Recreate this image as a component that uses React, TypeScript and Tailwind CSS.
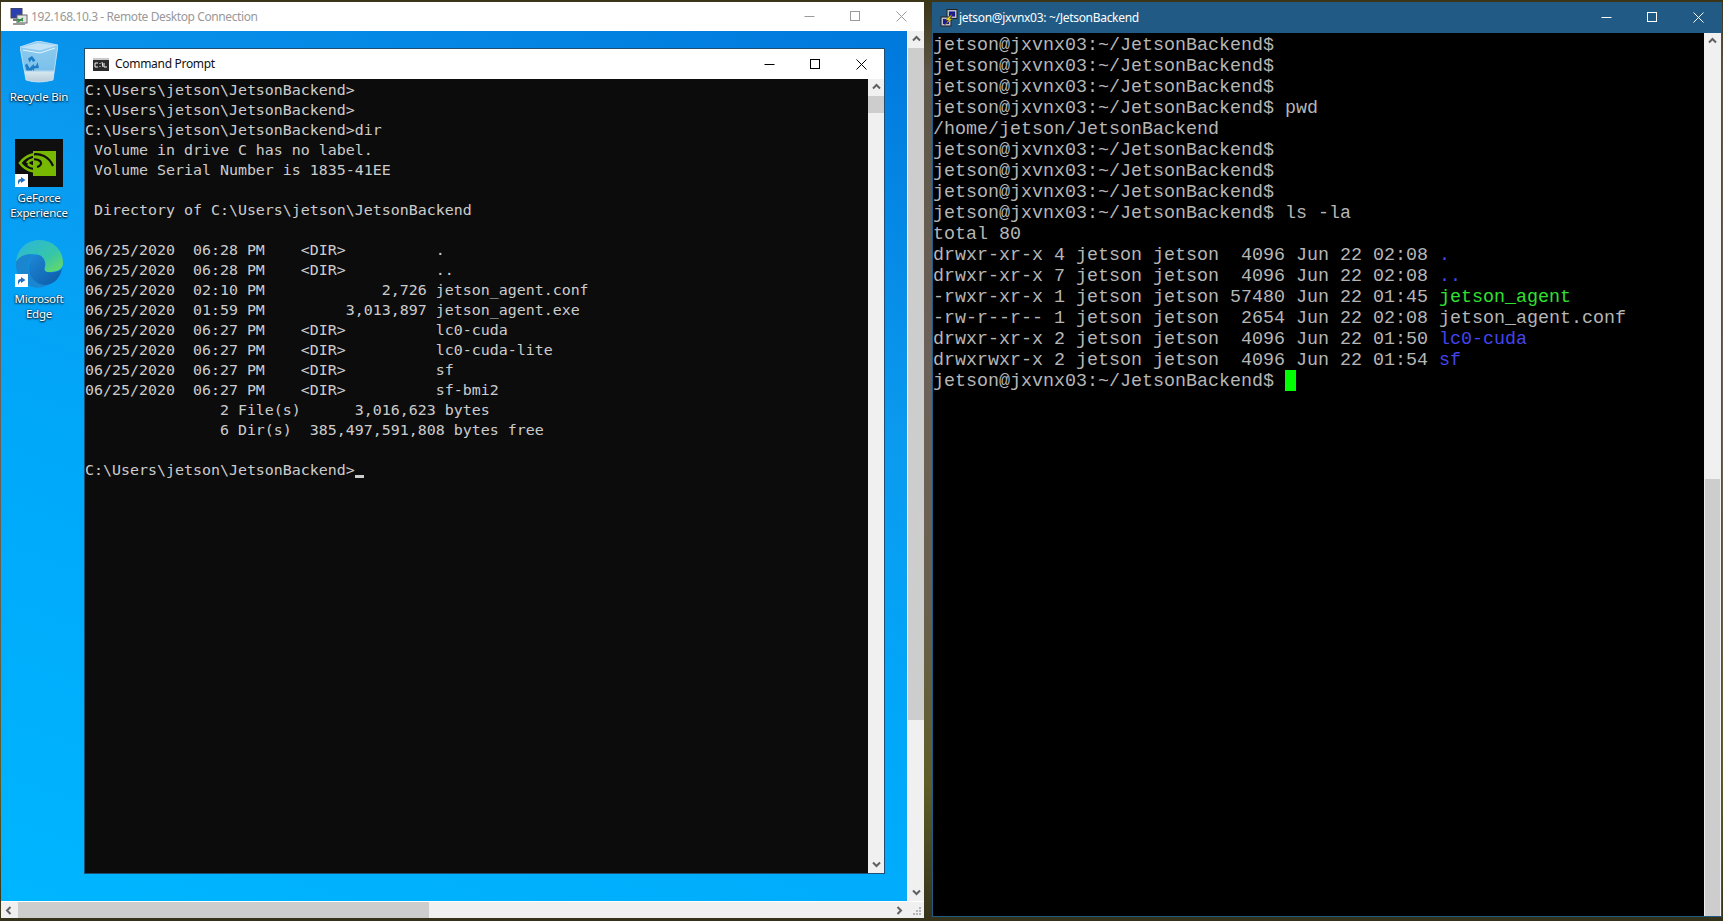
import type { ReactNode } from "react";

const cmdLines = [
  "C:\\Users\\jetson\\JetsonBackend>",
  "C:\\Users\\jetson\\JetsonBackend>",
  "C:\\Users\\jetson\\JetsonBackend>dir",
  " Volume in drive C has no label.",
  " Volume Serial Number is 1835-41EE",
  "",
  " Directory of C:\\Users\\jetson\\JetsonBackend",
  "",
  "06/25/2020  06:28 PM    <DIR>          .",
  "06/25/2020  06:28 PM    <DIR>          ..",
  "06/25/2020  02:10 PM             2,726 jetson_agent.conf",
  "06/25/2020  01:59 PM         3,013,897 jetson_agent.exe",
  "06/25/2020  06:27 PM    <DIR>          lc0-cuda",
  "06/25/2020  06:27 PM    <DIR>          lc0-cuda-lite",
  "06/25/2020  06:27 PM    <DIR>          sf",
  "06/25/2020  06:27 PM    <DIR>          sf-bmi2",
  "               2 File(s)      3,016,623 bytes",
  "               6 Dir(s)  385,497,591,808 bytes free",
  "",
];

const prompt = "jetson@jxvnx03:~/JetsonBackend$";
const termLines: [string, string?, "blue" | "green"?][] = [
  [prompt],
  [prompt],
  [prompt],
  [prompt + " pwd"],
  ["/home/jetson/JetsonBackend"],
  [prompt],
  [prompt],
  [prompt],
  [prompt + " ls -la"],
  ["total 80"],
  ["drwxr-xr-x 4 jetson jetson  4096 Jun 22 02:08 ", ".", "blue"],
  ["drwxr-xr-x 7 jetson jetson  4096 Jun 22 02:08 ", "..", "blue"],
  ["-rwxr-xr-x 1 jetson jetson 57480 Jun 22 01:45 ", "jetson_agent", "green"],
  ["-rw-r--r-- 1 jetson jetson  2654 Jun 22 02:08 jetson_agent.conf"],
  ["drwxr-xr-x 2 jetson jetson  4096 Jun 22 01:50 ", "lc0-cuda", "blue"],
  ["drwxrwxr-x 2 jetson jetson  4096 Jun 22 01:54 ", "sf", "blue"],
];

function WinControls({ color }: { color: string }) {
  return (
    <div className="flex h-full items-center" style={{ color }}>
      <div className="flex w-[46px] justify-center">
        <svg width="11" height="11" viewBox="0 0 11 11" fill="none" stroke="currentColor" strokeWidth="1">
          <path d="M0.5 5.5H10.5" />
        </svg>
      </div>
      <div className="flex w-[46px] justify-center">
        <svg width="11" height="11" viewBox="0 0 11 11" fill="none" stroke="currentColor" strokeWidth="1">
          <rect x="0.5" y="0.5" width="9" height="9" />
        </svg>
      </div>
      <div className="flex w-[46px] justify-center">
        <svg width="11" height="11" viewBox="0 0 11 11" fill="none" stroke="currentColor" strokeWidth="1">
          <path d="M0.5 0.5L10.5 10.5M10.5 0.5L0.5 10.5" />
        </svg>
      </div>
    </div>
  );
}

function Chevron({ dir }: { dir: "up" | "down" | "left" | "right" }) {
  const d = {
    up: "M1 5.5L4.5 2L8 5.5",
    down: "M1 2.5L4.5 6L8 2.5",
    left: "M5.5 1L2 4.5L5.5 8",
    right: "M2.5 1L6 4.5L2.5 8",
  }[dir];
  return (
    <svg width="9" height="9" viewBox="0 0 9 9" fill="none" stroke="#606060" strokeWidth="2">
      <path d={d} />
    </svg>
  );
}

function ShortcutBadge() {
  return (
    <div className="flex size-[13px] items-center justify-center bg-white">
      <svg width="11" height="11" viewBox="0 0 11 11">
        <path d="M2 10V6.5C2 4.8 3.2 4 5 4V2L9.5 5L5 8V6.2C3.8 6.2 3 7.5 2 10Z" fill="#1f6fc4" />
      </svg>
    </div>
  );
}

function DesktopIcon({ icon, label }: { icon: ReactNode; label: string[] }) {
  return (
    <div className="flex flex-col items-center">
      {icon}
      <div className="mt-[3px] text-center font-['Noto_Sans',sans-serif] text-[11.5px] leading-[15.5px] tracking-[-0.2px] text-white [text-shadow:0_1px_2px_#000,0_0_2px_#003a66]">
        {label.map((l) => (
          <div key={l} className="whitespace-nowrap">
            {l}
          </div>
        ))}
      </div>
    </div>
  );
}

function RecycleBin() {
  return (
    <svg width="38" height="42" viewBox="0 0 38 42" className="mb-[3px]">
      <defs>
        <linearGradient id="bin" x1="0" y1="0" x2="0" y2="1">
          <stop offset="0" stopColor="#8fcdf0" />
          <stop offset="0.7" stopColor="#7cc0ea" />
          <stop offset="0.76" stopColor="#d4e6f0" />
          <stop offset="1" stopColor="#b9cbd6" />
        </linearGradient>
      </defs>
      <path d="M0 6L18 0L38 4L33 39Q18 43 6 39Z" fill="url(#bin)" stroke="#cfeafa" strokeWidth="0.8" />
      <path d="M1 6.5L18 2L37 4.5L20 9.5Z" fill="#bfe2f6" />
      <path d="M3 9L20 12L35 7" fill="none" stroke="#e6f5fd" strokeWidth="1" />
      <path
        d="M8 17.5L12 15L15.5 19.5L13 21L11.5 18.5L9.5 21.5ZM17.5 21L19 27L14 27.5V30L10 26.5L14 23V25L16 24.7ZM5 24L7 22.5L9.5 27L12 27V29.5H6.5Z"
        fill="#1c7cc4"
      />
    </svg>
  );
}

function GeForce() {
  return (
    <div className="relative size-[48px] bg-[#0f0f0f]">
      <svg width="48" height="48" viewBox="0 0 48 48">
        <defs>
          <clipPath id="eyeL">
            <rect x="0" y="0" width="19" height="48" />
          </clipPath>
          <clipPath id="eyeR">
            <rect x="19" y="0" width="29" height="48" />
          </clipPath>
        </defs>
        <rect x="18" y="12" width="23" height="25" fill="#76b900" />
        <g fill="none" strokeWidth="2.6" clipPath="url(#eyeL)" stroke="#76b900">
          <path d="M5 24C11 16 20 13 29 17C33 19 36 22 38 25C33 31 25 34 17 32C12 31 8 28 5 24Z" />
          <path d="M12 24C15 20 21 19 25 22C27 24 26 27 22 28C18 28 15 27 13 25" />
        </g>
        <g fill="none" strokeWidth="2.2" clipPath="url(#eyeR)" stroke="#0f0f0f">
          <path d="M5 24C11 16 20 13 29 17C33 19 36 22 38 27" />
          <path d="M12 24C15 20 21 19 25 22C27 24 26 27 22 28" />
        </g>
      </svg>
      <div className="absolute bottom-[0px] left-0">
        <ShortcutBadge />
      </div>
    </div>
  );
}

function Edge() {
  return (
    <div className="relative size-[48px]">
      <svg width="48" height="48" viewBox="0 0 48 48">
        <defs>
          <linearGradient id="edgeA" x1="0" y1="0" x2="1" y2="1">
            <stop offset="0" stopColor="#2bb4e0" />
            <stop offset="0.6" stopColor="#35c6a8" />
            <stop offset="1" stopColor="#6ddc5e" />
          </linearGradient>
          <linearGradient id="edgeB" x1="0" y1="0" x2="1" y2="1">
            <stop offset="0" stopColor="#1e88d8" />
            <stop offset="1" stopColor="#0c59a4" />
          </linearGradient>
        </defs>
        <path d="M1 22C2 9 12 0 24 0C38 0 48 10 48 23C48 30 41 32 33 32C28 32 28 30 30 27C32 22 27 14 19 14C10 14 4 17 1 22Z" fill="url(#edgeA)" />
        <path d="M1 22C5 15 13 13 20 15C15 18 12 24 14 32C16 40 24 46 33 45C28 48 21 49 15 46C6 42 0 33 1 22Z" fill="#1a86d0" />
        <path d="M20 15C26 14 31 19 30 26C28 32 32 33 40 32C44 31 46 30 47 28C46 37 39 45 30 45C23 45 15 39 14 31C13 24 15 18 20 15Z" fill="url(#edgeB)" />
      </svg>
      <div className="absolute bottom-[1px] left-0">
        <ShortcutBadge />
      </div>
    </div>
  );
}

function RdpIcon() {
  return (
    <svg width="18" height="18" viewBox="0 0 18 18">
      <rect x="1" y="0" width="11" height="10" fill="#2a3fb0" stroke="#444" strokeWidth="1" />
      <rect x="7" y="7" width="10" height="8" fill="#e4e4e4" stroke="#666" strokeWidth="1" />
      <path d="M3 12H13" stroke="#777" strokeWidth="2" />
      <path d="M8 11L10 12.5L8 14M13 10L11 11.5L13 13" stroke="#1f9a38" strokeWidth="1.2" fill="none" />
      <rect x="3" y="15" width="12" height="2" fill="#9a9a9a" />
    </svg>
  );
}

function CmdIcon() {
  return (
    <svg width="16" height="13" viewBox="0 0 16 13">
      <rect width="16" height="13" fill="#2a2a2a" />
      <rect width="16" height="2" fill="#c9c9c9" />
      <path d="M5 5H2V9H5M7 5V6M7 8V9M9 4L10 9M11 5V9H14" stroke="#f2f2f2" strokeWidth="1" fill="none" />
    </svg>
  );
}

function PuttyIcon() {
  return (
    <svg width="18" height="18" viewBox="0 0 18 18">
      <rect x="7" y="0.5" width="10" height="9" fill="#bcbccc" stroke="#222" strokeWidth="1" />
      <rect x="9" y="2.5" width="6" height="5" fill="#18189a" />
      <rect x="1" y="8" width="10" height="9" fill="#bcbccc" stroke="#222" strokeWidth="1" />
      <rect x="3" y="10" width="6" height="5" fill="#18189a" />
      <path d="M13 4L5 11.5L8.5 11L4.5 16L13 9.5L9.5 10Z" fill="#ffe81a" stroke="#222" strokeWidth="0.5" />
    </svg>
  );
}

function CommandPrompt() {
  return (
    <div className="flex h-[826px] w-[801px] flex-col border border-[#1f4f72] bg-white">
      <div className="flex h-[30px] shrink-0 items-center justify-between">
        <div className="flex items-center pl-[8px]">
          <CmdIcon />
          <span className="ml-[6px] font-['Noto_Sans',sans-serif] text-[12px] tracking-[-0.3px] text-[#111]">Command Prompt</span>
        </div>
        <WinControls color="#000000" />
      </div>
      <div className="flex min-h-0 flex-1">
        <div className="flex-1 bg-[#0c0c0c] font-['DejaVu_Sans_Mono',monospace] text-[14.95px] leading-[22px] text-[#cccccc]">
          {cmdLines.map((l, i) => (
            <div key={i} className="h-[20px] whitespace-pre">
              {l}
            </div>
          ))}
          <div className="flex h-[20px] whitespace-pre">
            {"C:\\Users\\jetson\\JetsonBackend>"}
            <span className="mt-[16px] h-[3px] w-[9px] bg-[#cccccc]" />
          </div>
        </div>
        <div className="flex w-[16px] shrink-0 flex-col bg-[#f0f0f0]">
          <div className="flex h-[17px] items-center justify-center">
            <Chevron dir="up" />
          </div>
          <div className="h-[17px] w-full bg-[#cdcdcd]" />
          <div className="flex-1" />
          <div className="flex h-[17px] items-center justify-center">
            <Chevron dir="down" />
          </div>
        </div>
      </div>
    </div>
  );
}

function RemoteDesktop() {
  return (
    <div className="flex h-[916px] w-[923px] shrink-0 flex-col bg-white">
      <div className="flex h-[29px] shrink-0 items-center justify-between">
        <div className="flex items-center pl-[9px]">
          <RdpIcon />
          <span className="ml-[3px] font-['Noto_Sans',sans-serif] text-[12px] tracking-[-0.4px] text-[#999]">
            192.168.10.3 - Remote Desktop Connection
          </span>
        </div>
        <WinControls color="#9a9a9a" />
      </div>
      <div className="flex min-h-0 flex-1">
        <div className="flex w-[906px] bg-[linear-gradient(200deg,#0078dc_0%,#0a9bf0_35%,#00a8fa_60%,#00b6ff_100%)] pt-[17px]">
          <div className="-mt-[7px] flex w-[76px] flex-col items-center">
            <DesktopIcon icon={<RecycleBin />} label={["Recycle Bin"]} />
            <div className="mt-[34px]">
              <DesktopIcon icon={<GeForce />} label={["GeForce", "Experience"]} />
            </div>
            <div className="mt-[19px]">
              <DesktopIcon icon={<Edge />} label={["Microsoft", "Edge"]} />
            </div>
          </div>
          <div className="ml-[7px]">
            <CommandPrompt />
          </div>
        </div>
        <div className="ml-px flex w-[16px] flex-col bg-[#f0f0f0]">
          <div className="flex h-[17px] items-center justify-center">
            <Chevron dir="up" />
          </div>
          <div className="h-[672px] bg-[#cdcdcd]" />
          <div className="flex-1" />
          <div className="flex h-[17px] items-center justify-center">
            <Chevron dir="down" />
          </div>
        </div>
      </div>
      <div className="mt-px flex h-[16px] shrink-0 bg-[#f0f0f0]">
        <div className="flex w-[17px] items-center justify-center">
          <Chevron dir="left" />
        </div>
        <div className="w-[411px] bg-[#cdcdcd]" />
        <div className="flex-1" />
        <div className="flex w-[17px] items-center justify-center">
          <Chevron dir="right" />
        </div>
        <div className="flex w-[16px] items-end justify-end p-[2px]">
          <svg width="9" height="9" viewBox="0 0 9 9" fill="#b5b5b5">
            <rect x="6" y="0" width="2" height="2" />
            <rect x="3" y="3" width="2" height="2" />
            <rect x="6" y="3" width="2" height="2" />
            <rect x="0" y="6" width="2" height="2" />
            <rect x="3" y="6" width="2" height="2" />
            <rect x="6" y="6" width="2" height="2" />
          </svg>
        </div>
      </div>
    </div>
  );
}

function Terminal() {
  return (
    <div className="ml-[8px] flex h-[915px] w-[790px] shrink-0 flex-col border-x border-b border-[#215a85] bg-black">
      <div className="flex h-[31px] shrink-0 items-center justify-between bg-[#215a85]">
        <div className="flex items-center pl-[7px]">
          <PuttyIcon />
          <span className="ml-[1px] font-['Noto_Sans',sans-serif] text-[12px] tracking-[-0.3px] text-white">
            jetson@jxvnx03: ~/JetsonBackend
          </span>
        </div>
        <WinControls color="#ffffff" />
      </div>
      <div className="flex min-h-0 flex-1">
        <div className="flex-1 pt-px font-['Liberation_Mono',monospace] text-[18.33px] leading-[23px] text-[#b6b6b6]">
          {termLines.map(([text, name, kind], i) => (
            <div key={i} className="h-[21px] whitespace-pre">
              {text}
              {name && <span className={kind === "green" ? "text-[#30e030]" : "text-[#4444ee]"}>{name}</span>}
            </div>
          ))}
          <div className="flex h-[21px] whitespace-pre">
            {prompt + " "}
            <span className="h-[21px] w-[11px] bg-[#00ff00]" />
          </div>
        </div>
        <div className="flex w-[17px] shrink-0 flex-col bg-[#f0f0f0]">
          <div className="flex h-[17px] items-center justify-center">
            <Chevron dir="up" />
          </div>
          <div className="h-[429px]" />
          <div className="mx-px flex-1 bg-[#cdcdcd]" />
        </div>
      </div>
    </div>
  );
}

export default function App() {
  return (
    <div className="flex h-[921px] w-[1723px] overflow-hidden bg-[linear-gradient(180deg,#3a3418_0%,#5e5648_8%,#6d625a_40%,#6a6050_65%,#5f5e28_85%,#34321a_100%)] pl-px pt-[2px]">
      <RemoteDesktop />
      <Terminal />
    </div>
  );
}
